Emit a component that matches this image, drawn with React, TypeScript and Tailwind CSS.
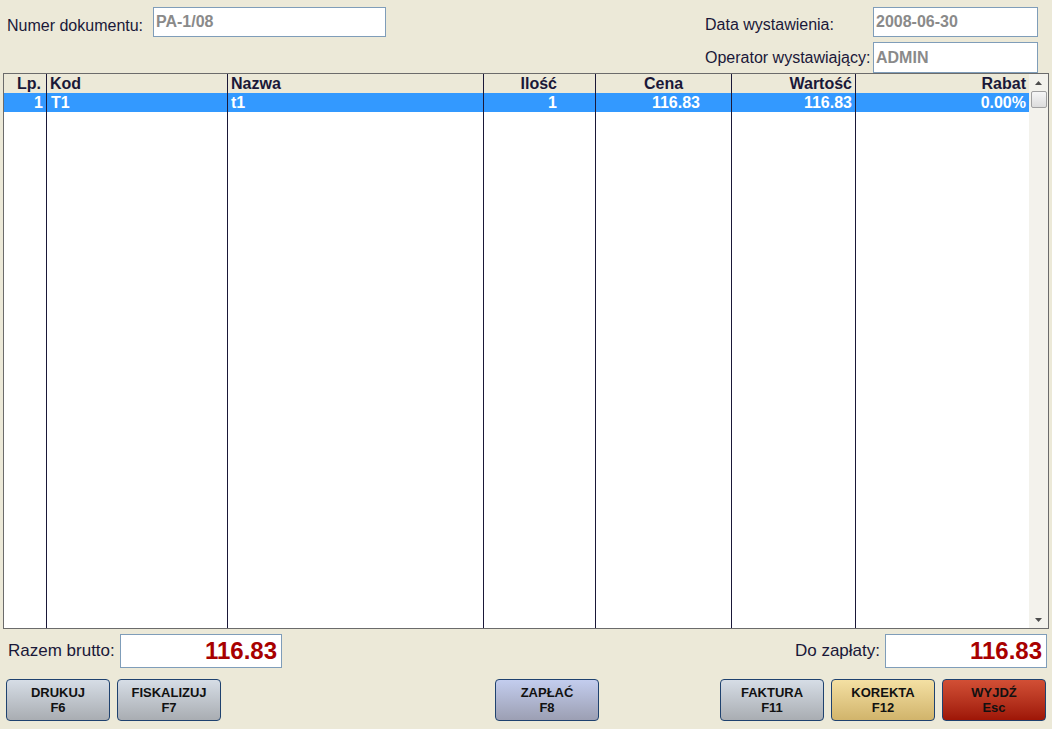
import React from 'react';

const font = { fontFamily: '"Liberation Sans", Arial, sans-serif' };

type Col = { key: string; label: string; value: string; w: string; head: string; cell: string };

const COLUMNS: Col[] = [
    { key: 'lp', label: 'Lp.', value: '1', w: 'w-[43px]', head: 'justify-end pr-[5px]', cell: 'justify-end pr-[3px]' },
    { key: 'kod', label: 'Kod', value: 'T1', w: 'w-[181px]', head: 'justify-start pl-[3px]', cell: 'justify-start pl-[4px]' },
    { key: 'nazwa', label: 'Nazwa', value: 't1', w: 'w-[256px]', head: 'justify-start pl-[3px]', cell: 'justify-start pl-[3px]' },
    { key: 'ilosc', label: 'Ilość', value: '1', w: 'w-[112px]', head: 'justify-end pr-[38px]', cell: 'justify-end pr-[38px]' },
    { key: 'cena', label: 'Cena', value: '116.83', w: 'w-[136px]', head: 'justify-center', cell: 'justify-end pr-[31px]' },
    { key: 'wartosc', label: 'Wartość', value: '116.83', w: 'w-[124px]', head: 'justify-end pr-[3px]', cell: 'justify-end pr-[3px]' },
];

const BUTTON_STYLES: Record<string, string> = {
    gray: 'bg-gradient-to-b from-[#d6dde6] to-[#a9adb2]',
    blue: 'bg-gradient-to-b from-[#c3cdee] to-[#9c9fb3]',
    yellow: 'bg-gradient-to-b from-[#f4e0a3] to-[#d1b46b]',
    red: 'bg-gradient-to-b from-[#d24f35] to-[#9e1506]',
};

function FnButton({ label, hotkey, tone }: { label: string; hotkey: string; tone: string }) {
    return (
        <button
            type="button"
            className={`flex flex-col items-center justify-center w-[104px] h-[42px] rounded-[4px] border border-[#1f426f] text-[#111] text-[13px] font-bold leading-[15px] ${BUTTON_STYLES[tone]}`}
            style={font}
        >
            <span>{label}</span>
            <span>{hotkey}</span>
        </button>
    );
}

function TextBox({ value, className }: { value: string; className: string }) {
    return (
        <div className={`flex items-center bg-white border border-[#7f9db9] text-[#8a8a8a] font-bold text-[16px] pl-[2px] ${className}`}>
            {value}
        </div>
    );
}

export default function App() {
    return (
        <div className="w-[1052px] h-[729px] bg-[#ece9d8] text-[#1a1838] flex flex-col overflow-hidden" style={font}>
            {/* Nagłówek dokumentu */}
            <div className="flex justify-between h-[73px]">
                <div className="flex items-start pt-[7px] pl-[7px]">
                    <span className="w-[146px] text-[16px] mt-[7px]">Numer dokumentu:</span>
                    <TextBox value="PA-1/08" className="w-[233px] h-[30px]" />
                </div>
                <div className="flex flex-col pt-[7px] pr-[14px] gap-[5px]">
                    <div className="flex items-start h-[30px]">
                        <span className="w-[168px] text-[16px] leading-[18px] mt-[9px]">Data wystawienia:</span>
                        <TextBox value="2008-06-30" className="w-[165px] h-[30px]" />
                    </div>
                    <div className="flex items-center">
                        <span className="w-[168px] text-[16px]">Operator wystawiający:</span>
                        <TextBox value="ADMIN" className="w-[165px] h-[31px]" />
                    </div>
                </div>
            </div>

            {/* Tabela pozycji */}
            <div className="mx-[3px] h-[556px] border border-[#6b6b6b] bg-white flex text-[16px] font-bold">
                {COLUMNS.map((c) => (
                    <div key={c.key} className={`${c.w} flex flex-col border-r border-[#1a1838] shrink-0`}>
                        <div className={`h-[19px] bg-[#ece9d8] flex items-center ${c.head}`}>{c.label}</div>
                        <div className={`h-[19px] bg-[#3399ff] text-white flex items-center ${c.cell}`}>{c.value}</div>
                    </div>
                ))}
                <div className="flex-1 flex flex-col">
                    <div className="h-[19px] bg-[#ece9d8] flex items-center justify-end pr-[3px]">Rabat</div>
                    <div className="h-[19px] bg-[#3399ff] text-white flex items-center justify-end pr-[3px]">0.00%</div>
                </div>
                {/* Pasek przewijania */}
                <div className="w-[19px] bg-[#f3f2ec] flex flex-col items-center">
                    <div className="h-[17px] w-full flex items-center justify-center">
                        <svg width="7" height="4" viewBox="0 0 7 4"><path d="M3.5 0 L7 4 L0 4 Z" fill="#4d4d4d" /></svg>
                    </div>
                    <div className="w-[16px] h-[17px] border border-[#a0a0a0] bg-gradient-to-b from-[#f6f6f6] to-[#dcdcdc] rounded-[2px]" />
                    <div className="flex-1" />
                    <div className="h-[17px] w-full flex items-center justify-center">
                        <svg width="7" height="4" viewBox="0 0 7 4"><path d="M0 0 L7 0 L3.5 4 Z" fill="#4d4d4d" /></svg>
                    </div>
                </div>
            </div>

            {/* Podsumowanie */}
            <div className="flex justify-between items-center h-[34px] mt-[5px] px-[5px]">
                <div className="flex items-center">
                    <span className="w-[115px] text-[17px] pl-[3px]">Razem brutto:</span>
                    <div className="w-[162px] h-[34px] bg-white border border-[#7f9db9] flex items-center justify-end pr-[4px] text-[#a80000] font-bold text-[24px]">116.83</div>
                </div>
                <div className="flex items-center">
                    <span className="text-[17px] mr-[5px]">Do zapłaty:</span>
                    <div className="w-[162px] h-[34px] bg-white border border-[#7f9db9] flex items-center justify-end pr-[4px] text-[#a80000] font-bold text-[24px]">116.83</div>
                </div>
            </div>

            {/* Przyciski funkcyjne */}
            <div className="flex items-center mt-[11px] px-[6px]">
                <div className="flex gap-[7px]">
                    <FnButton label="DRUKUJ" hotkey="F6" tone="gray" />
                    <FnButton label="FISKALIZUJ" hotkey="F7" tone="gray" />
                </div>
                <div className="ml-[274px]">
                    <FnButton label="ZAPŁAĆ" hotkey="F8" tone="blue" />
                </div>
                <div className="ml-auto flex gap-[7px]">
                    <FnButton label="FAKTURA" hotkey="F11" tone="gray" />
                    <FnButton label="KOREKTA" hotkey="F12" tone="yellow" />
                    <FnButton label="WYJDŹ" hotkey="Esc" tone="red" />
                </div>
            </div>
        </div>
    );
}
